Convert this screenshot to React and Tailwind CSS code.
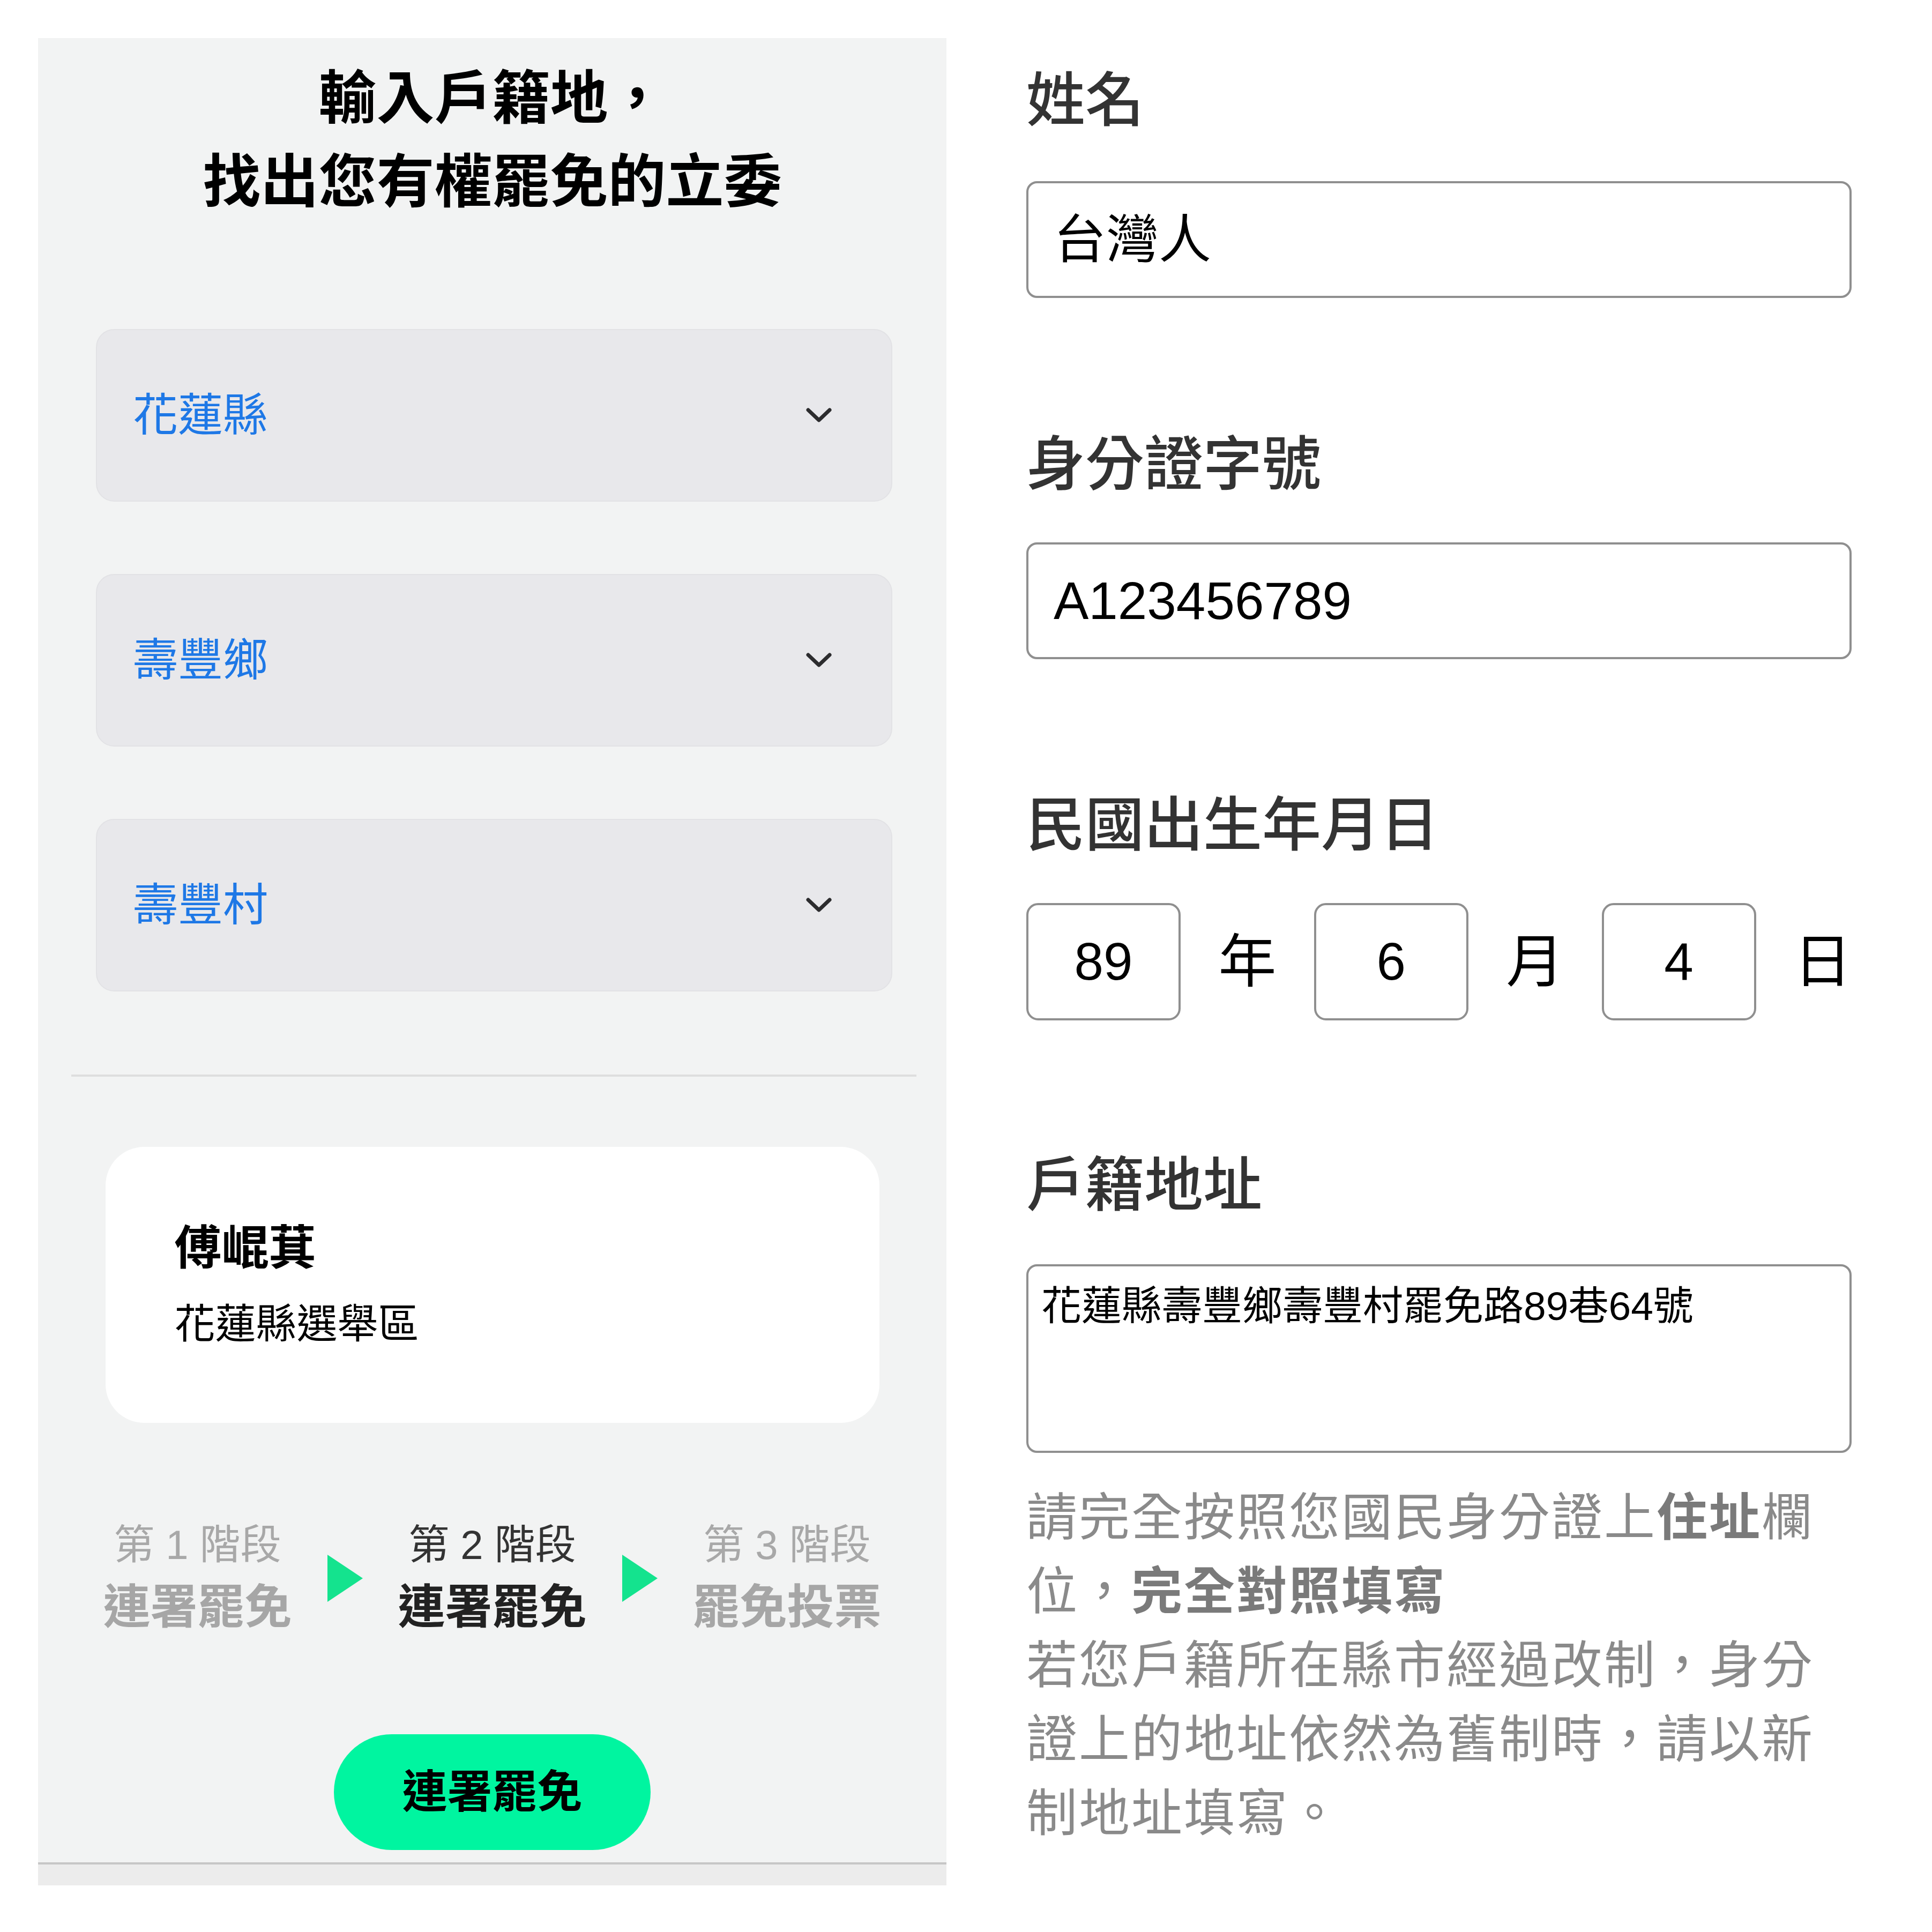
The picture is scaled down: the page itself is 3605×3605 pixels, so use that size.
import React from 'react';

const Chevron = () => (
  <svg width="50" height="30" viewBox="0 0 50 30" className="shrink-0">
    <polyline points="5,5 25,24 45,5" fill="none" stroke="#2c2c2e" strokeWidth="7" strokeLinecap="round" strokeLinejoin="round" />
  </svg>
);

const Arrow = () => (
  <svg width="66" height="88" viewBox="0 0 66 88" className="shrink-0">
    <polygon points="0,0 66,44 0,88" fill="#14e38e" />
  </svg>
);

const SelectBox = ({ value }) => (
  <div className="flex h-[322px] items-center justify-between rounded-[34px] border-2 border-[#e2e2e5] bg-[#e8e8eb] pl-[67px] pr-[110px]">
    <span className="text-[84px] leading-none text-[#1e78e6]">{value}</span>
    <Chevron />
  </div>
);

const Step = ({ n, title, active }) => (
  <div className="flex w-[400px] flex-col items-center">
    <div className={`text-[76px] leading-[100px] ${active ? 'text-[#333333]' : 'text-[#a8a8a8]'}`}>
      第 {n} 階段
    </div>
    <div className={`mt-[7px] text-[88px] font-bold leading-[117px] ${active ? 'text-[#222222]' : 'text-[#a6a6a6]'}`}>
      {title}
    </div>
  </div>
);

const Label = ({ children, className = '' }) => (
  <div className={`text-[110px] font-medium leading-[150px] text-[#333333] ${className}`}>{children}</div>
);

const TextBox = ({ value, className = '' }) => (
  <div className={`flex h-[218px] items-center rounded-[20px] border-4 border-[#8f8f8f] bg-white pl-[47px] text-[98px] text-black ${className}`}>
    {value}
  </div>
);

const DateBox = ({ value }) => (
  <div className="flex h-full w-[288px] items-center justify-center rounded-[22px] border-4 border-[#8f8f8f] bg-white text-[98px] text-black">
    {value}
  </div>
);

export default function App() {
  return (
    <div className="flex h-[3605px] w-[3605px] bg-white font-['Liberation_Sans','Noto_Sans_CJK_TC',sans-serif]">
      {/* phone screen */}
      <div className="ml-[71px] mt-[71px] flex h-[3447px] w-[1695px] flex-col bg-[#f2f3f3] pt-[35px]">
        <h1 className="text-center text-[108px] font-bold leading-[156px] text-black">
          輸入戶籍地，
          <br />
          找出您有權罷免的立委
        </h1>

        <div className="ml-[108px] mt-[196px] flex w-[1486px] flex-col gap-[135px]">
          <SelectBox value="花蓮縣" />
          <SelectBox value="壽豐鄉" />
          <SelectBox value="壽豐村" />
        </div>

        <div className="ml-[62px] mt-[155px] h-[4px] w-[1577px] bg-[#dedede]" />

        <div className="mx-auto mt-[131px] flex h-[515px] w-[1444px] flex-col justify-center rounded-[72px] bg-white pl-[129px]">
          <div className="text-[88px] font-bold leading-[120px] text-black">傅崐萁</div>
          <div className="mt-[27px] text-[76px] leading-[110px] text-black">花蓮縣選舉區</div>
        </div>

        <div className="mt-[178px] flex items-center justify-center gap-[42px]">
          <Step n="1" title="連署罷免" />
          <Arrow />
          <Step n="2" title="連署罷免" active />
          <Arrow />
          <Step n="3" title="罷免投票" />
        </div>

        <button className="mx-auto mt-[179px] flex h-[216px] w-[591px] items-center justify-center rounded-full bg-[#00f5a0] text-[84px] font-bold text-black">
          連署罷免
        </button>

        <div className="mt-[23px] h-[4px] bg-[#c6c6c6]" />
        <div className="flex-1 bg-[#ececec]" />
      </div>

      {/* form */}
      <div className="ml-[149px] flex w-[1540px] flex-col">
        <Label className="mt-[113px]">姓名</Label>
        <TextBox value="台灣人" className="mt-[75px]" />

        <Label className="mt-[236px]">身分證字號</Label>
        <TextBox value="A123456789" className="mt-[70px]" />

        <Label className="mt-[235px]">民國出生年月日</Label>
        <div className="mt-[70px] flex h-[219px] items-center justify-between">
          <DateBox value="89" />
          <span className="text-[108px] leading-none text-black">年</span>
          <DateBox value="6" />
          <span className="text-[108px] leading-none text-black">月</span>
          <DateBox value="4" />
          <span className="text-[108px] leading-none text-black">日</span>
        </div>

        <Label className="mt-[233px]">戶籍地址</Label>
        <div className="mt-[72px] h-[352px] rounded-[20px] border-4 border-[#8f8f8f] bg-white pl-[24px] pt-[18px] text-[75px] leading-[112px] text-black">
          花蓮縣壽豐鄉壽豐村罷免路89巷64號
        </div>

        <p className="mt-[52px] text-[95px] leading-[138px] tracking-[3px] text-[#8a8a8a]">
          請完全按照您國民身分證上<b className="font-bold text-[#7a7a7a]">住址</b>欄
          <br />
          位，<b className="font-bold text-[#7a7a7a]">完全對照填寫</b>
          <br />
          若您戶籍所在縣市經過改制，身分證上的地址依然為舊制時，請以新制地址填寫。
        </p>
      </div>
    </div>
  );
}
